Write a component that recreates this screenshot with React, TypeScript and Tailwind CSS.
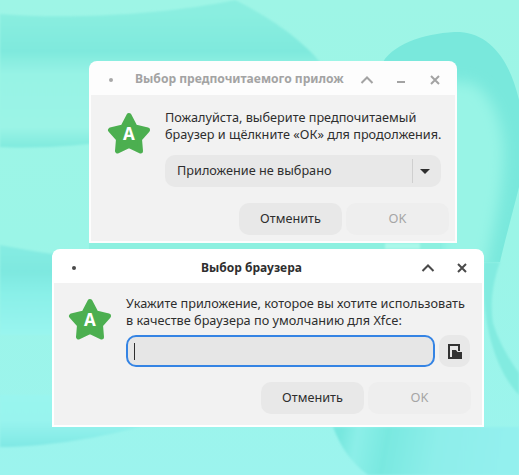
import React from "react";

const font = { fontFamily: '"Noto Sans", sans-serif' };

function Star() {
  return (
    <svg width="44" height="42" viewBox="0 0 44 42" className="shrink-0 mt-[3px]">
      <path
        d="M22 3.5 L28 15 L40.5 18 L32.5 27 L33.5 39 L22 33.5 L10.5 39 L11.5 27 L3.5 18 L16 15 Z"
        fill="#4caf50"
        stroke="#4caf50"
        strokeWidth="5"
        strokeLinejoin="round"
      />
      <text x="22" y="28" textAnchor="middle" fill="#fff" fontSize="17" fontWeight="700" fontFamily="Noto Sans">
        A
      </text>
    </svg>
  );
}

function Chevron({ color }: { color: string }) {
  return (
    <svg width="14" height="10" viewBox="0 0 14 10" className="shrink-0">
      <path d="M1.5 8 L7 2.5 L12.5 8" fill="none" stroke={color} strokeWidth="2" />
    </svg>
  );
}
function Close({ color }: { color: string }) {
  return (
    <svg width="12" height="12" viewBox="0 0 12 12" className="shrink-0">
      <path d="M2 2 L10 10 M10 2 L2 10" fill="none" stroke={color} strokeWidth="2" />
    </svg>
  );
}

function Wallpaper() {
  return (
    <svg className="absolute inset-0" width="519" height="475" viewBox="0 0 519 475">
      <defs>
        <linearGradient id="base" x1="0" y1="0" x2="0" y2="1">
          <stop offset="0" stopColor="#9ef5e6" />
          <stop offset="0.5" stopColor="#9bf5e7" />
          <stop offset="1" stopColor="#9cf4ee" />
        </linearGradient>
        <linearGradient id="tl" gradientUnits="userSpaceOnUse" x1="0" y1="14" x2="0" y2="147">
          <stop offset="0" stopColor="#8aeee0" />
          <stop offset="0.28" stopColor="#7fe9dd" />
          <stop offset="0.45" stopColor="#97f3e5" />
          <stop offset="0.85" stopColor="#9bf4e6" />
          <stop offset="1" stopColor="#80eade" />
        </linearGradient>
        <linearGradient id="ml" gradientUnits="userSpaceOnUse" x1="0" y1="245" x2="0" y2="335">
          <stop offset="0" stopColor="#86ece2" />
          <stop offset="0.3" stopColor="#7ee8e0" />
          <stop offset="0.55" stopColor="#8af0e8" />
          <stop offset="1" stopColor="#99f5ef" />
        </linearGradient>
        <linearGradient id="lb" gradientUnits="userSpaceOnUse" x1="0" y1="395" x2="0" y2="447">
          <stop offset="0" stopColor="#99f5ef" />
          <stop offset="0.5" stopColor="#98f4ee" />
          <stop offset="1" stopColor="#7fe8e4" />
        </linearGradient>
        <linearGradient id="br" gradientUnits="userSpaceOnUse" x1="340" y1="440" x2="500" y2="470">
          <stop offset="0" stopColor="#78e7df" />
          <stop offset="0.1" stopColor="#8cefe8" />
          <stop offset="0.28" stopColor="#79e8e0" />
          <stop offset="0.6" stopColor="#8eeeea" />
          <stop offset="1" stopColor="#93f0ee" />
        </linearGradient>
        <linearGradient id="mr" gradientUnits="userSpaceOnUse" x1="490" y1="320" x2="519" y2="440">
          <stop offset="0" stopColor="#80eade" />
          <stop offset="1" stopColor="#95f2ea" />
        </linearGradient>
        <clipPath id="blobClip">
          <path d="M383 62 C395 42 430 32 460 32 C490 34 510 60 519 100 V187 C512 215 505 240 500 262 L440 262 V62 Z" />
        </clipPath>
        <filter id="soft" x="-10%" y="-10%" width="120%" height="120%">
          <feGaussianBlur stdDeviation="0.8" />
        </filter>
        <filter id="softer" x="-30%" y="-30%" width="160%" height="160%">
          <feGaussianBlur stdDeviation="7" />
        </filter>
      </defs>
      <rect width="519" height="475" fill="url(#base)" />
      <path
        d="M0 14 C70 20 170 14 235 0 C275 20 310 45 330 75 V100 L120 140 C80 146 40 149 0 147 Z"
        fill="url(#tl)"
        filter="url(#soft)"
      />
      <path d="M0 245 C30 250 60 258 100 255 L200 255 V335 H0 Z" fill="url(#ml)" filter="url(#soft)" />
      <path d="M0 395 H140 V427 C90 440 40 447 0 447 Z" fill="url(#lb)" filter="url(#soft)" />
      <rect x="89" y="243" width="368" height="6" fill="#8df0e0" />
      <rect x="385" y="243" width="35" height="6" fill="#abf8ea" filter="url(#soft)" />
      <g clipPath="url(#blobClip)">
        <rect x="380" y="30" width="139" height="235" fill="#79e8dc" />
        <path
          d="M466 82 C488 85 503 120 504 150 C504 190 493 230 484 275 L440 275 V82 Z"
          fill="#98f4e6"
          filter="url(#softer)"
        />
      </g>
      <path d="M500 262 C492 285 490 305 493 323 C500 345 510 360 519 373 V395 C495 370 480 320 484 262 Z" fill="#82ebe0" filter="url(#soft)" />
      <path d="M333 427 C340 445 350 462 368 475 H519 V427 Z" fill="url(#br)" filter="url(#soft)" />
    </svg>
  );
}

function Btn({ children, disabled }: { children: React.ReactNode; disabled?: boolean }) {
  return (
    <div
      className={`w-[103px] h-8 rounded-[10px] flex items-center justify-center text-[12.7px] ${
        disabled ? "bg-[#eeeeee] text-[#a5a5a5]" : "bg-[#e8e8e8] text-[#2e2e2e]"
      }`}
    >
      {children}
    </div>
  );
}

export default function App() {
  return (
    <div className="relative w-[519px] h-[475px] overflow-hidden" style={font}>
      <Wallpaper />

      {/* Back window */}
      <div className="absolute left-[89px] top-[61px] w-[368px] h-[182px] bg-[#fdfdfd] rounded-t-[8px] flex flex-col px-[2px] pb-[2px]">
        <div className="h-[34px] shrink-0 flex items-center pt-[3px]">
          <div className="w-[4px] h-[4px] rounded-full bg-[#a8a8a8] ml-[18px] shrink-0" />
          <div className="ml-[22px] w-[209px] shrink-0 overflow-hidden whitespace-nowrap text-[12.1px] font-bold text-[#a3a3a3]">
            Выбор предпочитаемого прилож
          </div>
          <div className="ml-[16px]">
            <Chevron color="#a3a3a3" />
          </div>
          <div className="ml-[23px] w-[8px] h-[2px] bg-[#a3a3a3] mt-[5px] shrink-0" />
          <div className="ml-[24px]">
            <Close color="#a3a3a3" />
          </div>
        </div>
        <div className="flex-1 bg-[#f2f2f2] flex flex-col">
          <div className="flex pl-[16px] pt-[14px]">
            <Star />
            <div className="ml-[14px] w-[276px]">
              <div className="text-[12.7px] leading-[17px] text-[#2e2e2e] whitespace-nowrap">
                <div>Пожалуйста, выберите предпочитаемый</div>
                <div>браузер и щёлкните «ОК» для продолжения.</div>
              </div>
              <div className="mt-[12px] h-8 rounded-[10px] bg-[#e8e8e8] flex items-center text-[12.7px] text-[#2e2e2e]">
                <div className="flex-1 pl-[12px]">Приложение не выбрано</div>
                <div className="w-px h-6 bg-[#cfcfcf]" />
                <div className="w-[28px] flex justify-center pr-[4px]">
                  <div className="w-0 h-0 border-x-[5px] border-x-transparent border-t-[5px] border-t-[#2e2e2e]" />
                </div>
              </div>
            </div>
          </div>
          <div className="flex justify-end gap-[4px] mt-[16px] pr-[6px]">
            <Btn>Отменить</Btn>
            <Btn disabled>OK</Btn>
          </div>
        </div>
      </div>

      {/* Front window */}
      <div className="absolute left-[52px] top-[249px] w-[432px] h-[178px] bg-white rounded-t-[8px] flex flex-col px-[2px] pb-[2px]">
        <div className="h-[34px] shrink-0 flex items-center pt-[3px]">
          <div className="w-[4px] h-[4px] rounded-full bg-[#4a4a4a] ml-[18px] shrink-0" />
          <div className="flex-1 ml-[6px] text-center text-[12px] font-bold text-[#2e2e2e] whitespace-nowrap">
            Выбор браузера
          </div>
          <Chevron color="#4a4a4a" />
          <div className="ml-[21px] mr-[14px]">
            <Close color="#4a4a4a" />
          </div>
        </div>
        <div className="flex-1 bg-[#f2f2f2] flex flex-col">
          <div className="flex pl-[14px] pt-[12px]">
            <Star />
            <div className="ml-[14px]">
              <div className="text-[12.7px] leading-[17px] text-[#2e2e2e] whitespace-nowrap">
                <div>Укажите приложение, которое вы хотите использовать</div>
                <div>в качестве браузера по умолчанию для Xfce:</div>
              </div>
              <div className="flex gap-[4px] mt-[6px]">
                <div className="w-[309px] h-8 rounded-[10px] bg-[#e6e6e6] border-2 border-[#3584e4] flex items-center pl-[6px]">
                  <div className="w-px h-[17px] bg-[#2e2e2e]" />
                </div>
                <div className="w-[31px] h-8 rounded-[10px] bg-[#e8e8e8] flex items-center justify-center">
                  <svg width="14" height="15" viewBox="0 0 14 15">
                    <path d="M1 15 V1 H11 V7" fill="none" stroke="#333" strokeWidth="2" />
                    <path d="M1 14 H4" fill="none" stroke="#333" strokeWidth="2" />
                    <path d="M4 15 V6 H8 L9.5 8 H14 V15 Z" fill="#333" />
                  </svg>
                </div>
              </div>
            </div>
          </div>
          <div className="flex justify-end gap-[4px] mt-[15px] pr-[11px]">
            <Btn>Отменить</Btn>
            <Btn disabled>OK</Btn>
          </div>
        </div>
      </div>
    </div>
  );
}
